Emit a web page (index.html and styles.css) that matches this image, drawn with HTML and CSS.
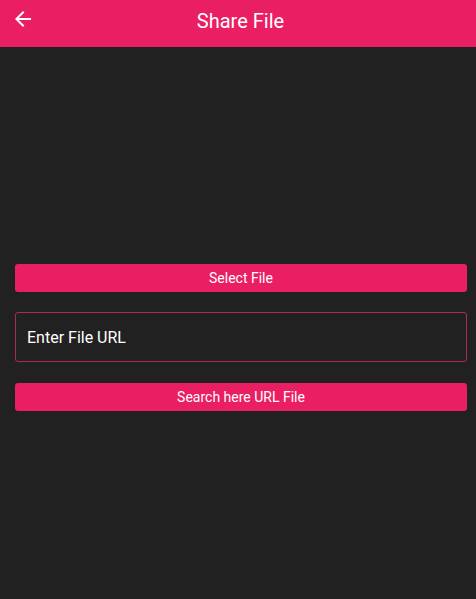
FILE: index.html
```html
<!DOCTYPE html>
<html>
<head>
<meta charset="utf-8">
<link rel="stylesheet" href="styles.css">
</head>
<body>
<div class="app">
  <header class="bar">
    <svg class="back" width="24" height="24" viewBox="0 0 24 24"><path d="M20 11H7.83l5.59-5.59L12 4l-8 8 8 8 1.41-1.41L7.83 13H20v-2z" fill="#fff"/></svg>
    <h1 class="title">Share File</h1>
  </header>
  <main class="content">
    <div class="btn">Select File</div>
    <div class="field">Enter File URL</div>
    <div class="btn">Search here URL File</div>
  </main>
</div>
</body>
</html>
```
FILE: styles.css
```css
html, body { margin: 0; padding: 0; }
body { background: #212121; font-family: Roboto, "Noto Sans", sans-serif; width: 476px; height: 599px; overflow: hidden; }
.app { display: flex; flex-direction: column; }
.bar { height: 47px; background: #E91E63; display: flex; align-items: center; justify-content: center; position: relative; }
.back { position: absolute; left: 11px; top: 7px; }
.title { margin: 0; color: #fff; font-size: 20px; font-weight: 400; margin-top: -6px; margin-left: 5px; }
.content { padding: 217px 9px 0 15px; display: flex; flex-direction: column; }
.btn { height: 28px; background: #E91E63; border-radius: 3px; color: #fff; font-size: 14px; font-weight: 400; display: flex; align-items: center; justify-content: center; }
.field { margin: 20px 0 21px; height: 48px; border: 1px solid #b0285a; border-radius: 3px; color: #fff; font-size: 16px; font-weight: 400; display: flex; align-items: center; padding-left: 11px; }
```
